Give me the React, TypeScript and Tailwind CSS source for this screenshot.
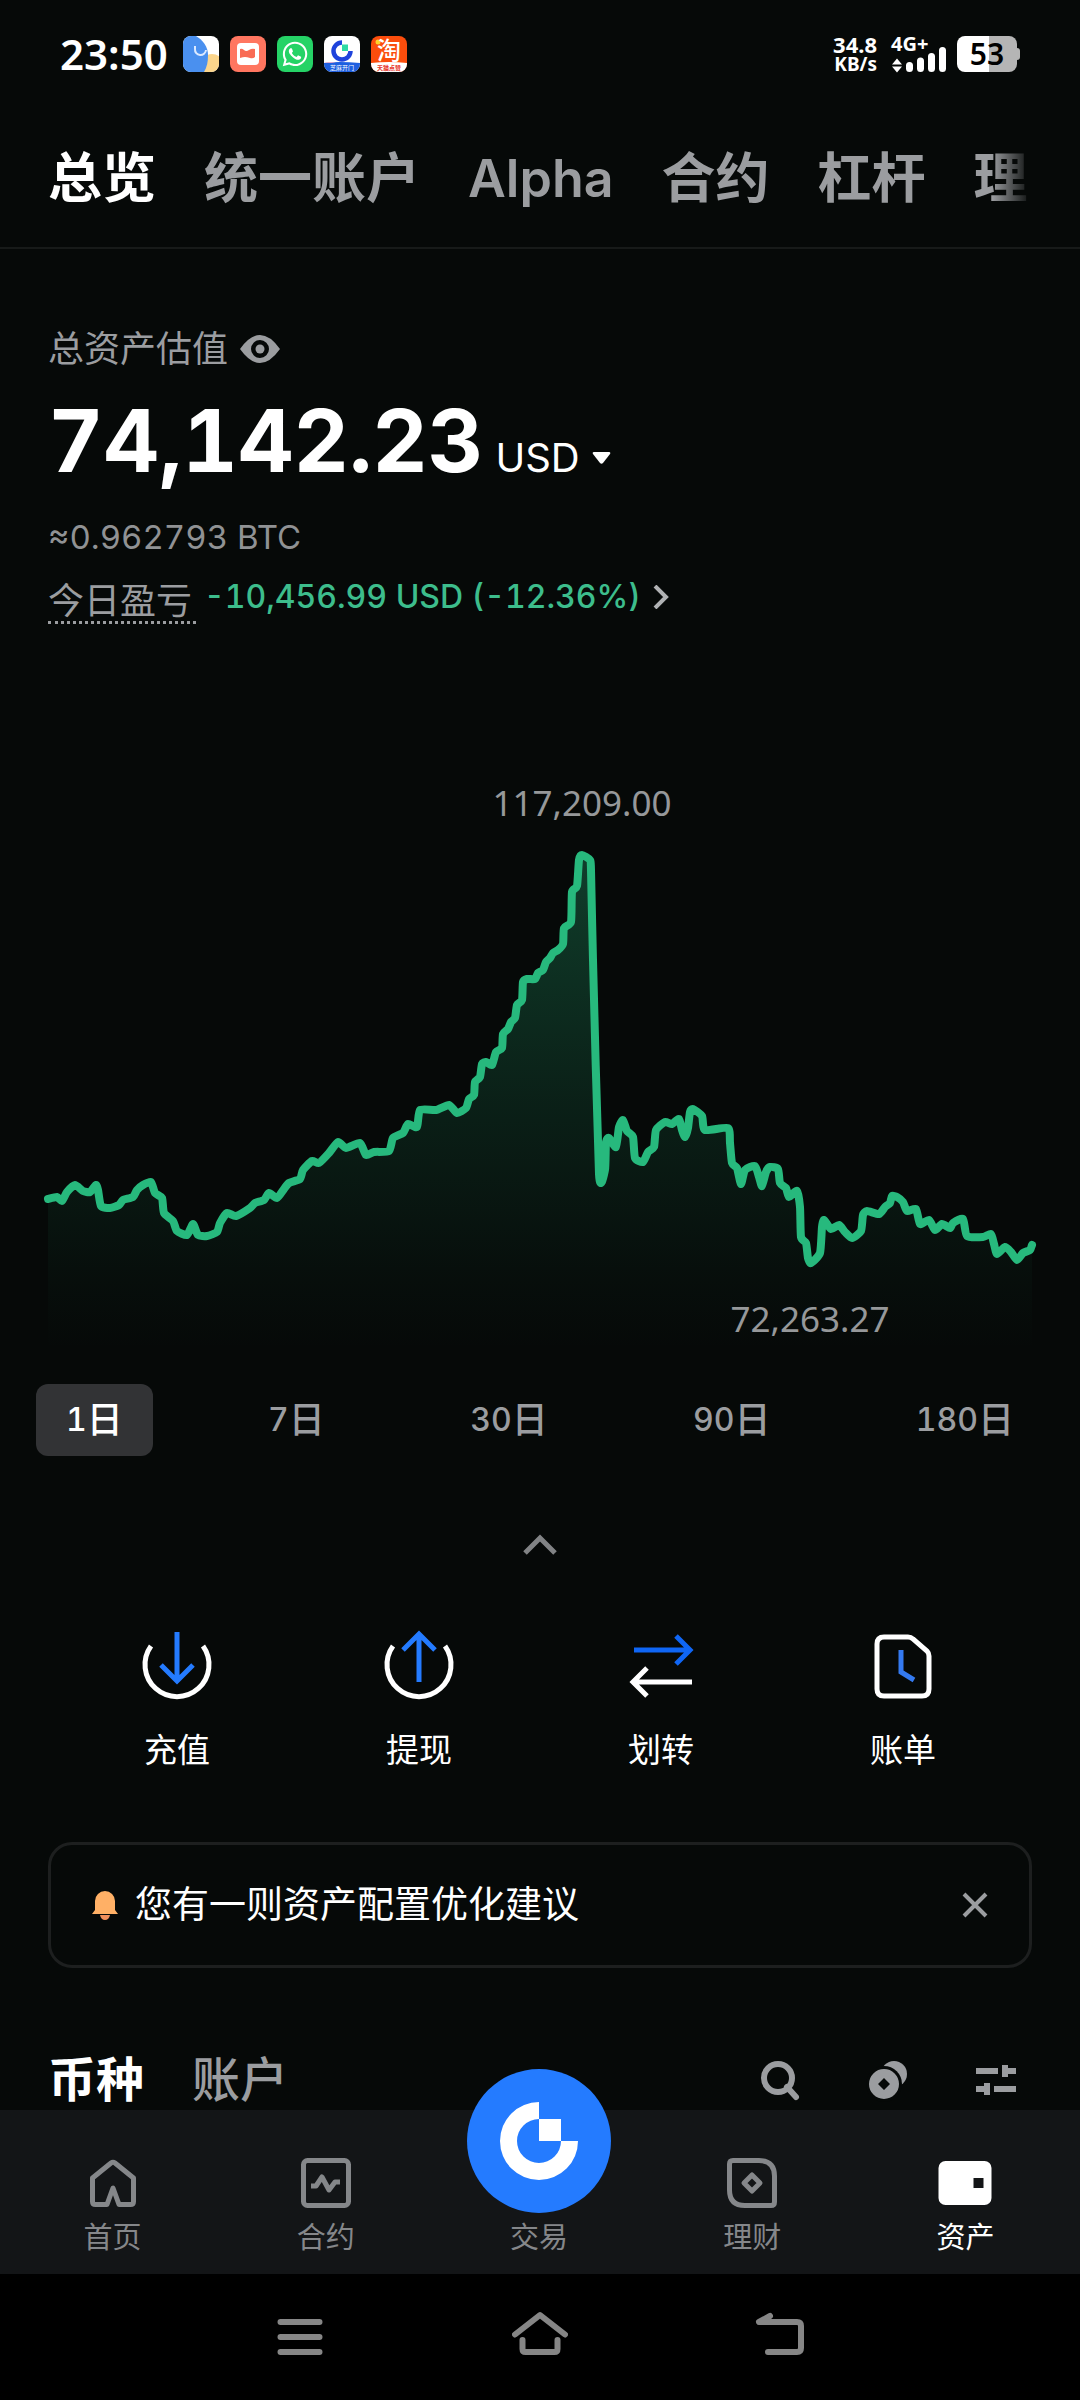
import React, { useState } from 'react'
import { FaWhatsapp } from 'react-icons/fa'

const accountTabs = ['总览', '统一账户', 'Alpha', '合约', '杠杆', '理财']

const periods = [
  { count: '1', unit: '日' },
  { count: '7', unit: '日' },
  { count: '30', unit: '日' },
  { count: '90', unit: '日' },
  { count: '180', unit: '日' },
]

// x, y in chart units
const points = [
  [48, 1199], [57, 1197], [62, 1201], [67, 1192], [75, 1185], [83, 1191], [90, 1192], [96, 1185],
  [98, 1190], [101, 1206], [110, 1208], [119, 1205], [123, 1200], [133, 1197], [137, 1190], [143, 1185],
  [151, 1182], [155, 1193], [162, 1198], [164, 1213], [173, 1221], [177, 1231], [187, 1235], [193, 1224],
  [198, 1235], [207, 1236], [217, 1232], [220, 1223], [227, 1213], [236, 1216], [250, 1208], [255, 1203],
  [264, 1200], [269, 1193], [277, 1198], [284, 1189], [289, 1183], [300, 1179], [303, 1170], [312, 1161],
  [319, 1163], [329, 1153], [338, 1142], [346, 1148], [360, 1143], [366, 1155], [374, 1152], [389, 1151],
  [393, 1138], [403, 1133], [408, 1124], [417, 1127], [420, 1110], [436, 1110], [449, 1105], [457, 1113],
  [466, 1108], [469, 1099], [474, 1095], [475, 1082], [480, 1077], [482, 1064], [486, 1062], [492, 1065],
  [496, 1052], [502, 1048], [503, 1034], [508, 1029], [511, 1022], [515, 1018], [517, 1005], [522, 1000],
  [523, 982], [527, 979], [535, 979], [538, 973], [543, 970], [546, 962], [550, 958], [553, 953],
  [558, 950], [563, 944], [564, 928], [571, 922], [572, 892], [577, 886], [579, 860], [582, 855],
  [590, 860], [591, 870], [593, 960], [599, 1174], [605, 1170], [606, 1142], [609, 1138], [616, 1147],
  [619, 1127], [623, 1120], [627, 1131], [633, 1137], [635, 1158], [643, 1162], [648, 1152], [654, 1147],
  [656, 1130], [665, 1122], [672, 1124], [679, 1119], [682, 1130], [685, 1137], [688, 1128], [690, 1112],
  [693, 1109], [702, 1116], [705, 1130], [728, 1128], [730, 1143], [732, 1163], [737, 1168], [741, 1184],
  [745, 1170], [755, 1166], [759, 1177], [762, 1186], [766, 1172], [770, 1167], [778, 1169], [780, 1183],
  [786, 1188], [789, 1197], [797, 1191], [800, 1207], [801, 1237], [806, 1243], [808, 1258], [811, 1263],
  [820, 1253], [822, 1227], [824, 1220], [831, 1229], [839, 1225], [845, 1232], [852, 1238], [861, 1231],
  [863, 1215], [867, 1211], [879, 1214], [885, 1207], [890, 1203], [892, 1196], [897, 1197], [903, 1202],
  [907, 1211], [916, 1209], [920, 1224], [929, 1220], [935, 1230], [942, 1224], [950, 1228], [953, 1223],
  [963, 1219], [967, 1236], [983, 1237], [991, 1234], [994, 1244], [997, 1254], [1005, 1247], [1011, 1252],
  [1017, 1260], [1023, 1253], [1030, 1250], [1032, 1245],
]

const linePath = points.reduce((path, [x, y], i) => {
  if (i === 0) return `M${x} ${y}`
  const before = points[Math.max(i - 2, 0)]
  const prev = points[i - 1]
  const next = points[Math.min(i + 1, points.length - 1)]
  const k = 0.1
  const c1 = `${prev[0] + (x - before[0]) * k} ${prev[1] + (y - before[1]) * k}`
  const c2 = `${x - (next[0] - prev[0]) * k} ${y - (next[1] - prev[1]) * k}`
  return `${path}C${c1} ${c2} ${x} ${y}`
}, '')

function StatusBar() {
  return (
    <div className="flex items-center justify-between pt-9 px-15 h-18 font-['Noto_Sans',sans-serif] text-white">
      <div className="flex items-center gap-[11px]">
        <span className="text-[42px] leading-9 font-semibold mr-1">23:50</span>
        <svg className="size-9" viewBox="0 0 36 36">
          <clipPath id="app-shape">
            <rect width="36" height="36" rx="8" />
          </clipPath>
          <g clipPath="url(#app-shape)">
            <rect width="36" height="36" fill="#fff" />
            <circle cx="29" cy="30" r="12" fill="#fbd58c" />
            <path d="M0 0h13c7 4 12 11 12 19 0 7-1 12-4 17H0z" fill="#4a90ef" />
            <path d="M12 10v3a5.500 5.500 0 0 0 11 1" fill="none" stroke="#dbe9ff" strokeWidth="2" />
          </g>
        </svg>
        <svg className="size-9" viewBox="0 0 36 36">
          <rect width="36" height="36" rx="8" fill="#ff7660" />
          <rect x="7" y="7" width="22" height="22" rx="4" fill="#fff" />
          <path d="M10 13q2-1 4 1t5 0 6-1v8q-2 2-5 1t-5-1-5 1z" fill="#f96b55" />
        </svg>
        <span className="size-9 rounded-lg bg-[#25d366] flex items-center justify-center">
          <FaWhatsapp className="size-7" />
        </span>
        <svg className="size-9" viewBox="0 0 36 36">
          <g clipPath="url(#app-shape)">
            <rect width="36" height="36" fill="#fff" />
            <path d="M18 6.500a8.500 8.500 0 1 0 8.500 8.500" fill="none" stroke="#1f43dc" strokeWidth="4.500" />
            <rect x="18" y="8.500" width="6" height="6.500" fill="#2edaa4" />
            <path d="M0 27q14-2 36 0v9H0z" fill="#1e5fe0" />
            <path d="M0 27q6-2 12 0z" fill="#e9aacb" />
            <text x="18" y="34" fontSize="6" fill="#fff" textAnchor="middle" fontFamily="Noto Sans CJK SC">芝麻开门</text>
          </g>
        </svg>
        <svg className="size-9" viewBox="0 0 36 36">
          <g clipPath="url(#app-shape)">
            <rect width="36" height="36" fill="#fb4d0c" />
            <circle cx="7" cy="6" r="2.500" fill="#ffd52b" />
            <path d="M0 27q18-2 36 0v9H0z" fill="#fff" />
            <text x="18" y="23" fontSize="24" fontWeight="500" fill="#fff" textAnchor="middle" fontFamily="Noto Sans CJK SC">淘</text>
            <text x="18" y="34" fontSize="6" fontWeight="700" fill="#e8352b" textAnchor="middle" fontFamily="Noto Sans CJK SC">天猫点赞</text>
          </g>
        </svg>
      </div>
      <div className="flex items-center gap-[10px]">
        <div className="flex flex-col items-end mr-1 text-[22px] leading-5 font-bold">
          <span>34.8</span>
          <span className="text-[19px]">KB/s</span>
        </div>
        <svg className="w-14 h-9 overflow-visible" viewBox="0 0 56 36">
          <text x="0" y="15" fontSize="20" fontWeight="700" fill="#fff" fontFamily="Noto Sans">4G+</text>
          <path d="M6 22.500l5 6H1zM6 36.500l-5-6h10z" fill="#fff" />
          <g stroke="#fff" strokeWidth="7" strokeLinecap="round">
            <path d="M18.500 29.500v3M29.500 25v7.500M40.500 20.500v12M51.500 14.500v18" />
          </g>
        </svg>
        <div className="flex items-center">
          <div className="w-15 h-9 rounded-lg bg-linear-to-r from-white from-53% to-[#b5b5b5] to-53% text-[30px] leading-9 font-semibold text-black text-center">
            53
          </div>
          <span className="w-[3px] h-3 rounded-r-sm bg-[#b5b5b5]" />
        </div>
      </div>
    </div>
  )
}

function AccountTabs() {
  const [active, setActive] = useState('总览')
  return (
    <div className="relative pt-[75px] border-b-2 border-[#171a19]">
      <nav className="flex gap-12 ml-12 mr-13 pb-9 overflow-hidden leading-16">
        {accountTabs.map((tab) => (
          <button
            key={tab}
            onClick={() => setActive(tab)}
            className={`shrink-0 ${tab === 'Alpha' ? 'text-[52px] font-semibold' : 'text-[54px] font-bold'} ${
              active === tab ? 'text-white' : 'text-[#9b9da0]'
            }`}
          >
            {tab}
          </button>
        ))}
      </nav>
      <div className="absolute right-12 top-18 h-18 w-10 bg-linear-to-r from-transparent to-[#060908]" />
    </div>
  )
}

function Balance() {
  return (
    <section className="px-12 pt-20">
      <div className="flex items-center gap-3 text-[36px] leading-10 text-[#9b9da0]">
        <span>总资产估值</span>
        <button aria-label="隐藏资产">
          <svg className="w-10 h-7" viewBox="0 0 40 28">
            <path
              fillRule="evenodd"
              fill="currentColor"
              d="M0 14Q10 0 20 0T40 14Q30 28 20 28T0 14zM20 5a9 9 0 1 0 0 18a9 9 0 1 0 0-18z"
            />
            <circle cx="20" cy="14" r="4.500" fill="currentColor" />
          </svg>
        </button>
      </div>
      <div className="flex items-baseline gap-3 mt-7 text-white">
        <span className="text-[86px] leading-[88px] font-bold tabular-nums">74,142.23</span>
        <button className="flex items-center gap-3 text-[40px] leading-10">
          USD
          <svg className="w-5 h-3" viewBox="0 0 20 12">
            <path d="M2 0h15q2 0 1 2l-7 9q-1.500 1.500-3 0L1 2Q0 0 2 0z" fill="currentColor" />
          </svg>
        </button>
      </div>
      <p className="mt-8 text-[33px] leading-10 text-[#909294] tabular-nums">≈0.962793 BTC</p>
      <div className="flex items-start gap-2 mt-6">
        <span className="pr-1 text-[36px] leading-10 text-[#9b9da0] border-b-3 border-dotted border-[#9b9da0]">今日盈亏</span>
        <a href="#pnl" className="flex items-center gap-3 text-[32px] leading-8 font-medium tabular-nums text-[#3dbd8c]">
          -10,456.99 USD (-12.36%)
          <svg className="w-4 h-6" viewBox="0 0 16 24" fill="none" stroke="#b0b2b4" strokeWidth="4">
            <path d="M2 1l11 11L2 23" />
          </svg>
        </a>
      </div>
    </section>
  )
}

function Chart() {
  return (
    <svg className="w-full h-auto mt-34" viewBox="0 760 1080 600" fontFamily="Noto Sans" fontSize="35" fill="#96989a">
      <defs>
        <linearGradient id="area" gradientUnits="userSpaceOnUse" x1="0" y1="855" x2="0" y2="1350">
          <stop offset="0" stopColor="#27b97d" stopOpacity="0.300" />
          <stop offset="0.500" stopColor="#27b97d" stopOpacity="0.130" />
          <stop offset="0.850" stopColor="#27b97d" stopOpacity="0.030" />
          <stop offset="1" stopColor="#27b97d" stopOpacity="0" />
        </linearGradient>
      </defs>
      <path d={`${linePath}V1350H48Z`} fill="url(#area)" />
      <path d={linePath} fill="none" stroke="#27b97d" strokeWidth="8" strokeLinejoin="round" strokeLinecap="round" />
      <text x="582" y="816" textAnchor="middle">117,209.00</text>
      <text x="810" y="1332" textAnchor="middle">72,263.27</text>
    </svg>
  )
}

function Periods() {
  const [period, setPeriod] = useState('1')
  return (
    <div className="flex justify-between px-9 mt-6">
      {periods.map(({ count, unit }) => (
        <button
          key={count}
          onClick={() => setPeriod(count)}
          className={`flex items-center h-18 px-[30px] rounded-xl text-[32px] font-medium tabular-nums ${
            period === count ? 'bg-[#323335] text-white' : 'text-[#9b9da0]'
          }`}
        >
          {count}
          <span className="text-[36px]">{unit}</span>
        </button>
      ))}
    </div>
  )
}

const actions = [
  {
    name: '充值',
    icon: (
      <>
        <path d="M10 16a32 32 0 1 0 52 0" stroke="#fff" />
        <path d="M36 2v48M20 35l16 16 16-16" stroke="#247bff" />
      </>
    ),
  },
  {
    name: '提现',
    icon: (
      <>
        <path d="M10 16a32 32 0 1 0 52 0" stroke="#fff" />
        <path d="M36 52V5M20 20L36 4l16 16" stroke="#247bff" />
      </>
    ),
  },
  {
    name: '划转',
    icon: (
      <>
        <path d="M9 20h54M51 6l14 14-14 14" stroke="#0f66f5" />
        <path d="M67 52H10M22 38L8 52l14 14" stroke="#fff" />
      </>
    ),
  },
  {
    name: '账单',
    icon: (
      <>
        <path d="M17 7h24q3 0 5 2l14 12q2 2 2 5v33q0 7-7 7H17q-7 0-7-7V14q0-7 7-7z" stroke="#fff" />
        <path d="M34 20v22l13 8" stroke="#347af0" />
      </>
    ),
  },
]

function Actions() {
  return (
    <div className="grid grid-cols-4 px-14 mt-16">
      {actions.map(({ name, icon }) => (
        <button key={name} className="flex flex-col items-center gap-7 text-[33px] leading-10 text-white">
          <svg className="size-18" viewBox="0 0 72 72" fill="none" strokeWidth="5">
            {icon}
          </svg>
          {name}
        </button>
      ))}
    </div>
  )
}

function Notice() {
  return (
    <div className="flex items-center mx-12 mt-18 h-[126px] px-10 border-3 border-[#1d1f1f] rounded-3xl text-white">
      <svg className="w-7 h-8" viewBox="0 0 28 32">
        <path d="M4 12a10 10 0 0 1 20 0v9l3 4H1l3-4z" fill="#ffb066" />
        <path d="M9 26h10q-1 5-5 5t-5-5z" fill="#f08f5c" />
      </svg>
      <p className="ml-4 flex-1 text-[37px] leading-12">您有一则资产配置优化建议</p>
      <button aria-label="关闭">
        <svg className="size-7" viewBox="0 0 28 28" stroke="#9b9da0" strokeWidth="4">
          <path d="M3 3l22 22M25 3L3 25" />
        </svg>
      </button>
    </div>
  )
}

function AssetTabs() {
  return (
    <div className="flex items-center justify-between px-12 pr-[62px] mt-21 text-[#9b9da0]">
      <div className="flex gap-12 text-[48px] leading-14 font-medium">
        <button className="text-white font-bold">币种</button>
        <button>账户</button>
      </div>
      <div className="flex gap-16">
        <button aria-label="搜索">
          <svg className="size-11" viewBox="0 0 44 44" fill="none" stroke="currentColor" strokeWidth="6">
            <circle cx="20" cy="20" r="14" />
            <path d="M29 29l9 10" strokeLinecap="round" />
          </svg>
        </button>
        <button aria-label="小额兑换">
          <svg className="size-11" viewBox="0 0 44 44" fill="currentColor">
            <circle cx="28" cy="16" r="13" />
            <circle cx="18" cy="26" r="18" fill="#060908" />
            <path fillRule="evenodd" d="M18 11a15 15 0 1 0 0 30a15 15 0 1 0 0-30zM18 20l6 6-6 6-6-6z" />
          </svg>
        </button>
        <button aria-label="筛选">
          <svg className="size-11" viewBox="0 0 44 44" fill="currentColor">
            <path d="M2 10h22v6H2zM28 7h6v3h8v6h-8v3h-6zM2 28h8v-3h6v12h-6v-3H2zM20 28h22v6H20z" />
          </svg>
        </button>
      </div>
    </div>
  )
}

const navItems = [
  {
    name: '首页',
    icon: <path d="M4.500 20L23 5q2-1.500 4 0l18.500 15V43.500q0 3-3 3H31L25 30l-6 16.500H7.500q-3 0-3-3z" />,
  },
  {
    name: '合约',
    icon: (
      <>
        <rect x="2.500" y="2.500" width="45" height="45" rx="4" />
        <path d="M10 28h5l6-9 7 13 6-8h5" />
      </>
    ),
  },
  { name: '交易', icon: null },
  {
    name: '理财',
    icon: (
      <>
        <path d="M6 2.500h26q15.500 0 15.500 15.500v26q0 3.500-3.500 3.500H18Q2.500 47.500 2.500 32V6q0-3.500 3.500-3.500z" />
        <path d="M25 17l8 8-8 8-8-8z" />
      </>
    ),
  },
  {
    name: '资产',
    icon: (
      <path
        fillRule="evenodd"
        stroke="none"
        fill="currentColor"
        d="M7 3h39a7 7 0 0 1 7 7v30a7 7 0 0 1-7 7H7a7 7 0 0 1-7-7V10a7 7 0 0 1 7-7zM35 20v10h10V20z"
      />
    ),
  },
]

function BottomNav() {
  return (
    <nav className="grid grid-cols-5 items-end bg-[#131517] pb-[18px] pl-1.5 pr-2 text-[29px] leading-9">
      {navItems.map(({ name, icon }) => (
        <a
          key={name}
          href={`#${name}`}
          className={`flex flex-col items-center ${name === '资产' ? 'text-white' : 'text-[#85878a]'} ${
            icon ? 'gap-3 pt-12' : 'gap-[7px] -mt-11 relative'
          }`}
        >
          {icon ? (
            <svg
              className="h-[50px] w-[54px]"
              viewBox={name === '资产' ? '0 0 53 50' : '0 0 50 50'}
              fill="none"
              stroke="currentColor"
              strokeWidth="5"
              strokeLinejoin="round"
            >
              {icon}
            </svg>
          ) : (
            <span className="size-36 rounded-full bg-[#247bff] flex items-center justify-center text-white">
              <svg className="size-20" viewBox="0 0 80 80" fill="currentColor">
                <path d="M40 1a39 39 0 1 0 39 39H62a22 22 0 1 1-22-22z" />
                <path d="M40 18h22v22H40z" />
              </svg>
            </span>
          )}
          {name}
        </a>
      ))}
    </nav>
  )
}

function SystemBar() {
  return (
    <div className="grid grid-cols-3 px-45 py-9 bg-black">
      <button aria-label="最近任务" className="flex justify-center">
        <svg className="size-[54px]" viewBox="0 0 54 54" stroke="#868686" strokeWidth="6" strokeLinecap="round">
          <path d="M7.500 12h39M7.500 27h39M7.500 42h39" />
        </svg>
      </button>
      <button aria-label="主屏幕" className="flex justify-center">
        <svg className="w-[56px] h-[54px]" viewBox="0 0 56 54" fill="none" stroke="#868686" strokeWidth="6" strokeLinecap="round" strokeLinejoin="round">
          <path d="M3 24.500L28 5l25 19.500" />
          <path d="M10.500 30v9q0 3 3 3h29q3 0 3-3v-9" />
        </svg>
      </button>
      <button aria-label="返回" className="flex justify-center">
        <svg className="size-[54px]" viewBox="0 0 54 54" fill="none" stroke="#868686" strokeWidth="6" strokeLinecap="round" strokeLinejoin="round">
          <path d="M17 6L6 12h38q4 0 4 4v22q0 4-4 4H15" />
        </svg>
      </button>
    </div>
  )
}

function App() {
  return (
    <div className="min-h-screen flex flex-col bg-[#060908] font-[Inter,'Noto_Sans_CJK_SC',sans-serif]">
      <StatusBar />
      <AccountTabs />
      <main className="flex-1">
        <Balance />
        <Chart />
        <Periods />
        <button aria-label="收起" className="flex mx-auto mt-[66px]">
          <svg className="size-11" viewBox="0 0 44 44" fill="none" stroke="#818385" strokeWidth="5">
            <path d="M7 31l15-15 15 15" />
          </svg>
        </button>
        <Actions />
        <Notice />
        <AssetTabs />
      </main>
      <BottomNav />
      <SystemBar />
    </div>
  )
}

export default App
